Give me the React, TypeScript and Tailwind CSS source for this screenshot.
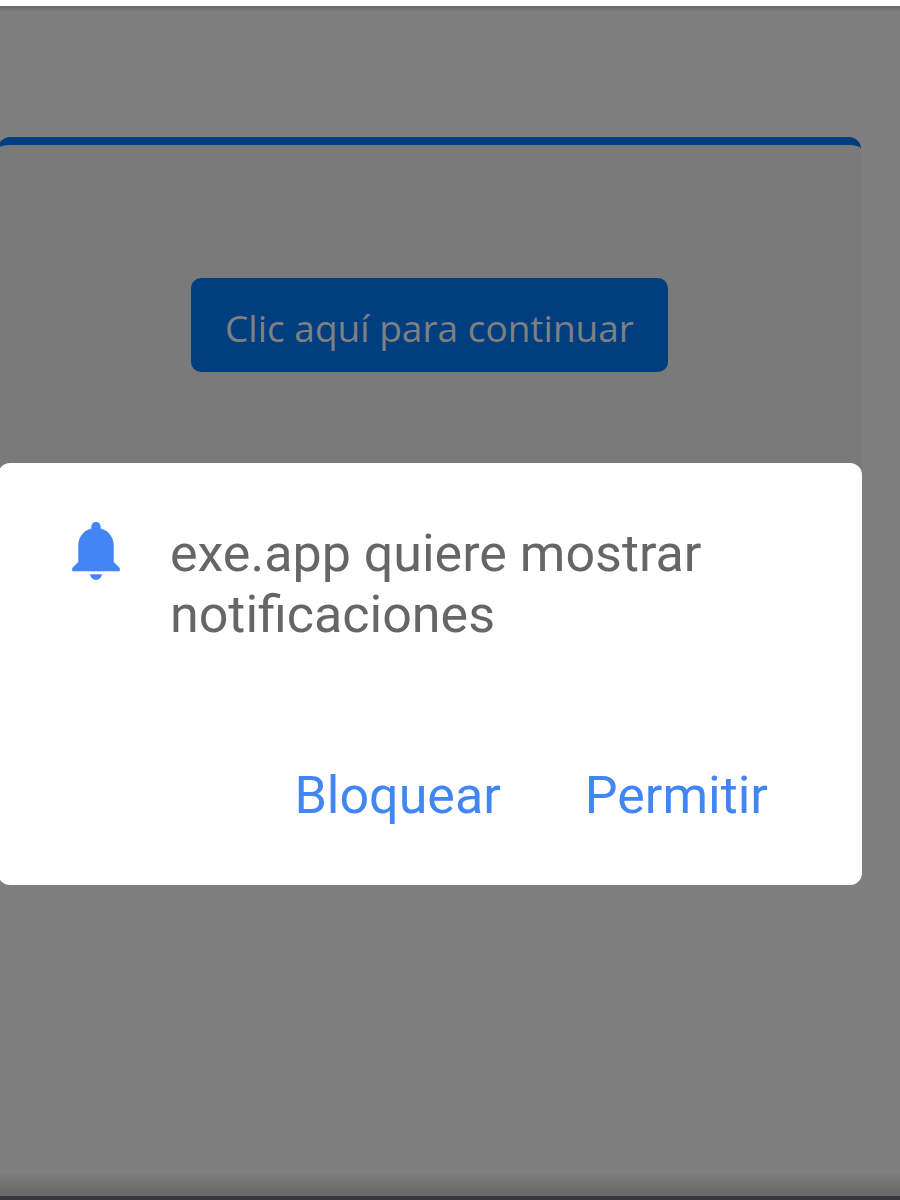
function BellIcon() {
  return (
    <svg viewBox="0 0 48 59" className="w-12 shrink-0 fill-[#4285f4]" aria-hidden="true">
      <path d="M24 0c-2.7 0-4.7 2.1-4.7 4.8v1.6C11.5 8.5 6.3 15.1 6.3 23v17L0.2 46.1v3.1h47.6v-3.1l-6.1-6.1v-17c0-7.9-5.2-14.5-13-16.6V4.8c0-2.7-2-4.8-4.7-4.8z" />
      <path d="M18 52.2h12c-0.5 3.3-3 5.7-6 5.7s-5.5-2.4-6-5.7z" />
    </svg>
  );
}

function PermissionDialog() {
  return (
    <section
      role="dialog"
      aria-labelledby="permission-title"
      className="absolute top-[463px] -left-0.5 right-[38px] rounded-xl bg-white pt-[59px] pr-[84px] pb-[51px] pl-[74px] font-['Roboto',sans-serif] text-[52px] leading-[61px]"
    >
      <div className="flex items-start gap-[50px]">
        <BellIcon />
        <h1 id="permission-title" className="pt-px text-[#666666]">
          exe.app quiere mostrar notificaciones
        </h1>
      </div>
      <div className="mt-28 flex justify-end gap-16 text-[#4285f4]">
        <button type="button" className="px-2.5 py-2">Bloquear</button>
        <button type="button" className="px-2.5 py-2">Permitir</button>
      </div>
    </section>
  );
}

export default function App() {
  return (
    <div className="relative flex min-h-screen flex-col overflow-hidden bg-[#7f7f7f]">
      <div className="h-1.5 bg-white" />
      <div className="h-1.5 bg-linear-to-b from-[#686868] to-[#7f7f7f]" />
      <main className="flex-1 pt-[125px] pr-[39px]">
        <div className="-ml-0.5 flex h-[560px] items-start justify-center rounded-xl border-t-8 border-[#003e80] bg-[#7a7a7a] pt-[133px]">
          <button
            type="button"
            className="rounded-[10px] bg-[#003e80] px-[34px] pt-[22px] pb-4 font-['Open_Sans',sans-serif] text-[37px] leading-[56px] text-[#808080]"
          >
            Clic aquí para continuar
          </button>
        </div>
      </main>
      <div className="h-6 bg-linear-to-b from-[#7f7f7f] to-[#666666]" />
      <div className="h-1 bg-[#3a363e]" />
      <PermissionDialog />
    </div>
  );
}
